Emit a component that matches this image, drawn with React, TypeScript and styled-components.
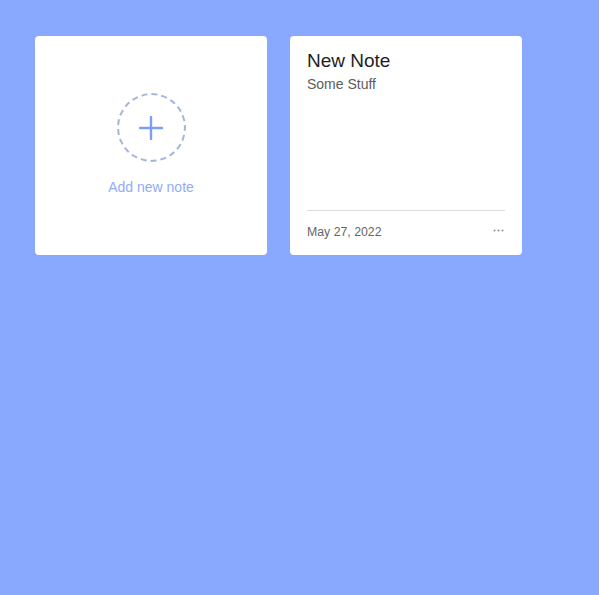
import React from "react";
import styled, { createGlobalStyle } from "styled-components";

const Global = createGlobalStyle`
  html, body { margin: 0; padding: 0; }
  body {
    background: #89a8ff;
    font-family: "Liberation Sans", Arial, sans-serif;
    min-height: 100vh;
  }
`;

const Grid = styled.div`
  display: grid;
  grid-template-columns: repeat(2, 232px);
  gap: 23px;
  padding: 36px 35px;
`;

const Card = styled.div`
  background: #fff;
  border-radius: 4px;
  height: 219px;
  box-sizing: border-box;
  display: flex;
  flex-direction: column;
`;

const AddCard = styled(Card)`
  align-items: center;
  padding-top: 57px;
  cursor: pointer;
`;

const AddCircle = styled.div`
  width: 69px;
  height: 69px;
  box-sizing: border-box;
  border: 2px dashed #a5b4da;
  border-radius: 50%;
  display: flex;
  align-items: center;
  justify-content: center;
`;

const AddLabel = styled.div`
  color: #8facf5;
  font-size: 14px;
  line-height: 16px;
  margin-top: 17px;
`;

const NoteCard = styled(Card)`
  padding: 13px 17px 15px;
`;

const Title = styled.div`
  font-size: 19px;
  line-height: 24px;
  color: #1e1e1e;
`;

const Body = styled.div`
  font-size: 14px;
  line-height: 18px;
  color: #5c5c5c;
  margin-top: 2px;
`;

const Footer = styled.div`
  margin-top: auto;
  border-top: 1px solid #dcdcdc;
  padding-top: 13px;
  display: flex;
  align-items: center;
  justify-content: space-between;
`;

const DateText = styled.span`
  font-size: 12.3px;
  line-height: 16px;
  color: #666;
`;

const More = styled.button`
  border: none;
  background: none;
  padding: 0;
  margin-right: 1px;
  margin-top: -3px;
  display: flex;
  cursor: pointer;
`;

export default function App() {
  return (
    <>
      <Global />
      <Grid>
        <AddCard>
          <AddCircle>
            <svg width="24" height="24" viewBox="0 0 24 24">
              <path d="M12 1v22M1 12h22" stroke="#7b9ff2" strokeWidth="2.4" strokeLinecap="round" />
            </svg>
          </AddCircle>
          <AddLabel>Add new note</AddLabel>
        </AddCard>
        <NoteCard>
          <Title>New Note</Title>
          <Body>Some Stuff</Body>
          <Footer>
            <DateText>May 27, 2022</DateText>
            <More aria-label="More">
              <svg width="11" height="3" viewBox="0 0 11 3">
                <circle cx="1.5" cy="1.5" r="1" fill="#8a8a8a" />
                <circle cx="5.5" cy="1.5" r="1" fill="#8a8a8a" />
                <circle cx="9.5" cy="1.5" r="1" fill="#8a8a8a" />
              </svg>
            </More>
          </Footer>
        </NoteCard>
      </Grid>
    </>
  );
}
